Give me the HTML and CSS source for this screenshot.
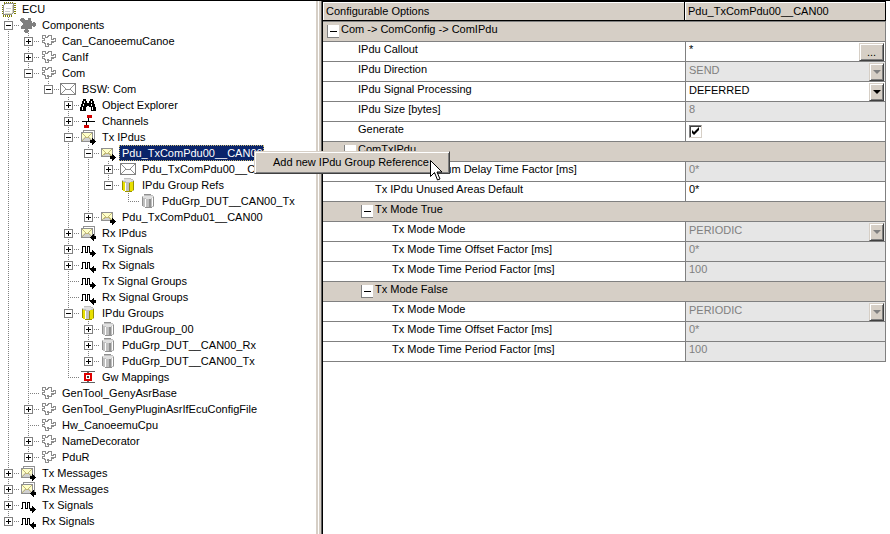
FILE: index.html
```html
<!DOCTYPE html>
<html lang="en">
<head>
<meta charset="utf-8">
<title>ECU configuration</title>
<link rel="stylesheet" href="styles.css">
</head>
<body>
<svg class="sprites" aria-hidden="true">
  <symbol id="chip" viewBox="0 0 16 16">
    <path d="M4 1.500h10M2.500 4v9M14.500 2v11M3 14.500h10" fill="none" stroke="#808000" stroke-width="2" stroke-dasharray="1 1"/>
    <path d="M5.500 2.500h8v9l-2 2h-8v-9z" fill="#fff" stroke="#909090"/>
    <path d="M6 7.500h5M5 10.500h5" stroke="#ccc"/>
    <path d="M12.500 4v8M5 12.500h7" stroke="#d8d8c0"/>
  </symbol>
  <symbol id="puzzle" viewBox="0 0 16 16">
    <path d="M1 1h3v1h1v1h3V1h3v3h1v2h1V5h2v1h1v3h-1v1h-2V9h-1v3H8v1h1v2H8v1H5v-1H4v-2h1v-1H1V9h1V8h1V6H2V5H1V4H0V2h1z" fill="#808080"/>
  </symbol>
  <symbol id="piece" viewBox="0 0 16 16">
    <path d="M2.500 2.500h3v2h2v-1h1v-1h3v4h2v-1h2v3h-2v1h-1v-1h-1v3h-3v-1h-1v1h1v2h-3v-3h-1v-1h-2v-2h2v-2h-2z" fill="#fff" stroke="#8c8c8c"/>
  </symbol>
  <symbol id="mail" viewBox="0 0 16 16">
    <path d="M.5 2.500h15v11H.5z" fill="#fff" stroke="#808080"/>
    <path d="M1 3l5 5h4l5-5M1 13l5-5M15 13l-5-5" fill="none" stroke="#909090"/>
  </symbol>
  <symbol id="binoculars" viewBox="0 0 16 16">
    <path d="M3 2h3v2h1v2h2V4h1V2h3v2h1v3h1v3h1v4h-5v-4H9V9H7v1H6v4H0v-4h1V7h1V4h1z"/>
    <path d="M4 4h1v2H4zM11 4h1v2h-1zM2 10h1v3H2zM12 10h1v3h-1zM3 7h1v2H3zM11 7h1v2h-1z" fill="#fff"/>
  </symbol>
  <symbol id="channels" viewBox="0 0 16 16">
    <path d="M2 8h13v1H2zM8 5h1v3H8zM6 9h1v3H6z"/>
    <path d="M7 2h5v3H7zM4 12h5v3H4z" fill="#d00000"/>
  </symbol>
  <symbol id="arrow-out" viewBox="0 0 16 16">
    <path d="M10 11h2V9h1v1h1v1h1v1h1v1h-1v1h-1v1h-1v1h-1v-2h-2z"/>
  </symbol>
  <symbol id="arrow-in" viewBox="0 0 16 16">
    <path d="M16 11h-2V9h-1v1h-1v1h-1v1h-1v1h1v1h1v1h1v1h1v-2h2z"/>
  </symbol>
  <symbol id="letters" viewBox="0 0 16 16">
    <path d="M3.500 1.500h11v10h-11z" fill="#fff" stroke="#909090"/>
    <path d="M1.500 3.500h11v9h-11z" fill="#ffffc8" stroke="#909090"/>
    <path d="M2 10l3-2 2 1 2-1 3 2v2H2z" fill="#d0d0d0"/>
    <path d="M2 4l4 4h2l4-4M2 12l4-4M12 12L8 8" fill="none" stroke="#c0b878"/>
  </symbol>
  <symbol id="letter" viewBox="0 0 16 16">
    <path d="M1.500 3.500h11v8h-11z" fill="#ffffc8" stroke="#909090"/>
    <path d="M2 10l3-2 2 1 2-1 3 2v1H2z" fill="#d0d0d0"/>
    <path d="M2 4l4 4h2l4-4M2 11l4-3M12 11L8 8" fill="none" stroke="#c0b878"/>
  </symbol>
  <symbol id="wave" viewBox="0 0 16 16">
    <path d="M1 11.500h1.500v-6h3v6h2v-6h2v6H11" fill="none" stroke="#000"/>
  </symbol>
  <symbol id="drum" viewBox="0 0 16 16">
    <path d="M4 1h7v1h2v1h1v11h-2v1H5v-1H3v-1H2V3h2z" fill="#c0c0c0"/>
    <path d="M3 3h10v2h-2v1H6V5H3z" fill="#e0e0e0"/>
    <path d="M5 6h1v8H5zM12 5h1v8h-1z" fill="#fff"/>
    <path d="M9 6h2v8H9zM2 4h1v9H2zM13 4h1v9h-1zM5 14h7v1H5zM4 1h7v1H4z" fill="#909090"/>
  </symbol>
  <symbol id="drum-yellow" viewBox="0 0 16 16">
    <path d="M4 1h7v1h2v1h1v11h-2v1H5v-1H3v-1H2V3h2z" fill="#c0c0c0"/>
    <path d="M3 5h2v9H3zM10 5h3v9h-3z" fill="#e8e000"/>
    <path d="M4 2h7v1h2v1h-2v1H6V4H3V3h1z" fill="#e0e0e0"/>
    <path d="M5 6h1v8H5z" fill="#fff"/>
    <path d="M2 4h1v9H2zM13 4h1v9h-1zM5 14h7v1H5zM9 6h1v8H9z" fill="#989000"/>
  </symbol>
  <symbol id="gateway" viewBox="0 0 16 16">
    <path d="M1 2h14v1H1zM1 13h14v1H1zM7 3h2v2H7zM7 11h2v2H7z" fill="#606060"/>
    <path d="M4 4h8v8H4z" fill="#e00000"/><path d="M6 6h4v4H6z" fill="#fff"/><path d="M7 7h2v2H7z" fill="#404040"/>
  </symbol>
</svg>

<main class="workspace">
  <nav class="tree" aria-label="ECU tree">
    <div class="node root"><svg class="icon"><use href="#chip"/></svg><span class="label">ECU</span></div>
    <ul class="branch">
      <li>
        <div class="node"><button class="toggle open" aria-label="Collapse"></button><svg class="icon"><use href="#puzzle"/></svg><span class="label">Components</span></div>
        <ul class="branch">
          <li><div class="node"><button class="toggle" aria-label="Expand"></button><svg class="icon"><use href="#piece"/></svg><span class="label">Can_CanoeemuCanoe</span></div></li>
          <li><div class="node"><button class="toggle" aria-label="Expand"></button><svg class="icon"><use href="#piece"/></svg><span class="label">CanIf</span></div></li>
          <li>
            <div class="node"><button class="toggle open" aria-label="Collapse"></button><svg class="icon"><use href="#piece"/></svg><span class="label">Com</span></div>
            <ul class="branch">
              <li>
                <div class="node"><button class="toggle open" aria-label="Collapse"></button><svg class="icon"><use href="#mail"/></svg><span class="label">BSW: Com</span></div>
                <ul class="branch">
                  <li><div class="node"><button class="toggle" aria-label="Expand"></button><svg class="icon"><use href="#binoculars"/></svg><span class="label">Object Explorer</span></div></li>
                  <li><div class="node"><button class="toggle" aria-label="Expand"></button><svg class="icon"><use href="#channels"/></svg><span class="label">Channels</span></div></li>
                  <li>
                    <div class="node"><button class="toggle open" aria-label="Collapse"></button><svg class="icon"><use href="#letters"/><use href="#arrow-out"/></svg><span class="label">Tx IPdus</span></div>
                    <ul class="branch">
                      <li>
                        <div class="node"><button class="toggle open" aria-label="Collapse"></button><svg class="icon"><use href="#letter"/><use href="#arrow-out"/></svg><span class="label selected">Pdu_TxComPdu00__CAN00</span>
                          <div class="context-menu" role="menu">
                            <button class="menu-item" role="menuitem">Add new IPdu Group Reference</button>
                            <svg class="pointer" viewBox="0 0 12 21" aria-hidden="true"><path d="M.5 .5v16l4-4 3 7.500 2.500-1-3-7h5z" fill="#fff" stroke="#000"/></svg>
                          </div>
                        </div>
                        <ul class="branch">
                          <li><div class="node"><button class="toggle" aria-label="Expand"></button><svg class="icon"><use href="#mail"/></svg><span class="label">Pdu_TxComPdu00__CAN00</span></div></li>
                          <li>
                            <div class="node"><button class="toggle open" aria-label="Collapse"></button><svg class="icon"><use href="#drum-yellow"/></svg><span class="label">IPdu Group Refs</span></div>
                            <ul class="branch">
                              <li><div class="node leaf"><svg class="icon"><use href="#drum"/></svg><span class="label">PduGrp_DUT__CAN00_Tx</span></div></li>
                            </ul>
                          </li>
                        </ul>
                      </li>
                      <li><div class="node"><button class="toggle" aria-label="Expand"></button><svg class="icon"><use href="#letter"/><use href="#arrow-out"/></svg><span class="label">Pdu_TxComPdu01__CAN00</span></div></li>
                    </ul>
                  </li>
                  <li><div class="node"><button class="toggle" aria-label="Expand"></button><svg class="icon"><use href="#letters"/><use href="#arrow-in"/></svg><span class="label">Rx IPdus</span></div></li>
                  <li><div class="node"><button class="toggle" aria-label="Expand"></button><svg class="icon"><use href="#wave"/><use href="#arrow-out"/></svg><span class="label">Tx Signals</span></div></li>
                  <li><div class="node"><button class="toggle" aria-label="Expand"></button><svg class="icon"><use href="#wave"/><use href="#arrow-in"/></svg><span class="label">Rx Signals</span></div></li>
                  <li><div class="node leaf"><svg class="icon"><use href="#wave"/><use href="#arrow-out"/></svg><span class="label">Tx Signal Groups</span></div></li>
                  <li><div class="node leaf"><svg class="icon"><use href="#wave"/><use href="#arrow-in"/></svg><span class="label">Rx Signal Groups</span></div></li>
                  <li>
                    <div class="node"><button class="toggle open" aria-label="Collapse"></button><svg class="icon"><use href="#drum-yellow"/></svg><span class="label">IPdu Groups</span></div>
                    <ul class="branch">
                      <li><div class="node"><button class="toggle" aria-label="Expand"></button><svg class="icon"><use href="#drum"/></svg><span class="label">IPduGroup_00</span></div></li>
                      <li><div class="node"><button class="toggle" aria-label="Expand"></button><svg class="icon"><use href="#drum"/></svg><span class="label">PduGrp_DUT__CAN00_Rx</span></div></li>
                      <li><div class="node"><button class="toggle" aria-label="Expand"></button><svg class="icon"><use href="#drum"/></svg><span class="label">PduGrp_DUT__CAN00_Tx</span></div></li>
                    </ul>
                  </li>
                  <li><div class="node leaf"><svg class="icon"><use href="#gateway"/></svg><span class="label">Gw Mappings</span></div></li>
                </ul>
              </li>
            </ul>
          </li>
          <li><div class="node leaf"><svg class="icon"><use href="#piece"/></svg><span class="label">GenTool_GenyAsrBase</span></div></li>
          <li><div class="node"><button class="toggle" aria-label="Expand"></button><svg class="icon"><use href="#piece"/></svg><span class="label">GenTool_GenyPluginAsrIfEcuConfigFile</span></div></li>
          <li><div class="node leaf"><svg class="icon"><use href="#piece"/></svg><span class="label">Hw_CanoeemuCpu</span></div></li>
          <li><div class="node"><button class="toggle" aria-label="Expand"></button><svg class="icon"><use href="#piece"/></svg><span class="label">NameDecorator</span></div></li>
          <li><div class="node"><button class="toggle" aria-label="Expand"></button><svg class="icon"><use href="#piece"/></svg><span class="label">PduR</span></div></li>
        </ul>
      </li>
      <li><div class="node"><button class="toggle" aria-label="Expand"></button><svg class="icon"><use href="#letters"/><use href="#arrow-out"/></svg><span class="label">Tx Messages</span></div></li>
      <li><div class="node"><button class="toggle" aria-label="Expand"></button><svg class="icon"><use href="#letters"/><use href="#arrow-in"/></svg><span class="label">Rx Messages</span></div></li>
      <li><div class="node"><button class="toggle" aria-label="Expand"></button><svg class="icon"><use href="#wave"/><use href="#arrow-out"/></svg><span class="label">Tx Signals</span></div></li>
      <li><div class="node"><button class="toggle" aria-label="Expand"></button><svg class="icon"><use href="#wave"/><use href="#arrow-in"/></svg><span class="label">Rx Signals</span></div></li>
    </ul>
  </nav>
  <div class="splitter"></div>
  <section class="options">
    <table class="grid">
      <colgroup><col><col class="value-column"></colgroup>
      <thead><tr><th scope="col">Configurable Options</th><th scope="col">Pdu_TxComPdu00__CAN00</th></tr></thead>
      <tbody>
        <tr class="group"><td colspan="2"><div class="name level-0"><button class="fold" aria-label="Collapse"></button>Com -&gt; ComConfig -&gt; ComIPdu</div></td></tr>
        <tr><td><label class="name level-1" for="callout">IPdu Callout</label></td><td><div class="field"><input id="callout" type="text" value="*"><button class="browse" aria-label="Browse">...</button></div></td></tr>
        <tr><td><label class="name level-1" for="direction">IPdu Direction</label></td><td class="locked"><div class="field"><select id="direction" disabled><option>SEND</option></select><span class="drop"></span></div></td></tr>
        <tr><td><label class="name level-1" for="processing">IPdu Signal Processing</label></td><td><div class="field"><select id="processing"><option>DEFERRED</option></select><span class="drop"></span></div></td></tr>
        <tr><td><label class="name level-1" for="size">IPdu Size [bytes]</label></td><td class="locked"><div class="field"><input id="size" type="text" value="8" disabled></div></td></tr>
        <tr><td><label class="name level-1" for="generate">Generate</label></td><td><div class="field"><input id="generate" type="checkbox" checked></div></td></tr>
        <tr class="group"><td colspan="2"><div class="name level-1"><button class="fold" aria-label="Collapse"></button>ComTxIPdu</div></td></tr>
        <tr><td><label class="name level-2" for="delay">Tx IPdu Minimum Delay Time Factor [ms]</label></td><td class="locked"><div class="field"><input id="delay" type="text" value="0*" disabled></div></td></tr>
        <tr><td><label class="name level-2" for="unused">Tx IPdu Unused Areas Default</label></td><td><div class="field"><input id="unused" type="text" value="0*"></div></td></tr>
        <tr class="group"><td colspan="2"><div class="name level-2"><button class="fold" aria-label="Collapse"></button>Tx Mode True</div></td></tr>
        <tr><td><label class="name level-3" for="true-mode">Tx Mode Mode</label></td><td class="locked"><div class="field"><select id="true-mode" disabled><option>PERIODIC</option></select><span class="drop"></span></div></td></tr>
        <tr><td><label class="name level-3" for="true-offset">Tx Mode Time Offset Factor [ms]</label></td><td class="locked"><div class="field"><input id="true-offset" type="text" value="0*" disabled></div></td></tr>
        <tr><td><label class="name level-3" for="true-period">Tx Mode Time Period Factor [ms]</label></td><td class="locked"><div class="field"><input id="true-period" type="text" value="100" disabled></div></td></tr>
        <tr class="group"><td colspan="2"><div class="name level-2"><button class="fold" aria-label="Collapse"></button>Tx Mode False</div></td></tr>
        <tr><td><label class="name level-3" for="false-mode">Tx Mode Mode</label></td><td class="locked"><div class="field"><select id="false-mode" disabled><option>PERIODIC</option></select><span class="drop"></span></div></td></tr>
        <tr><td><label class="name level-3" for="false-offset">Tx Mode Time Offset Factor [ms]</label></td><td class="locked"><div class="field"><input id="false-offset" type="text" value="0*" disabled></div></td></tr>
        <tr><td><label class="name level-3" for="false-period">Tx Mode Time Period Factor [ms]</label></td><td class="locked"><div class="field"><input id="false-period" type="text" value="100" disabled></div></td></tr>
      </tbody>
    </table>
  </section>
</main>
</body>
</html>
```
FILE: styles.css
```css
:root {
  --face: #d6cfc6;
  --line: #808080;
  --locked: #e6e6e6;
  --navy: #0a246a;
}

* { box-sizing: border-box; }

body {
  margin: 0;
  background: #fff;
  color: #000;
  font: 11px/16px "Liberation Sans", Arial, sans-serif;
}

button, input, select {
  margin: 0;
  padding: 0;
  border: 0;
  border-radius: 0;
  appearance: none;
  background: none;
  color: inherit;
  font: inherit;
}

.sprites { display: none; }

.workspace {
  display: grid;
  grid-template-columns: 316px 7px 1fr;
  min-height: 100vh;
  border-top: 1px solid #000;
}

/* Tree */
.branch {
  margin: 0;
  padding: 0;
  list-style: none;
}

.branch .branch { padding-left: 20px; }

.branch > li {
  background: repeating-linear-gradient(var(--line) 0 1px, transparent 1px 2px) 8px 0 / 1px 100% no-repeat;
}

.branch > li:last-child { background-size: 1px 8px; }

.node {
  position: relative;
  display: flex;
  align-items: center;
  height: 16px;
  padding-left: 4px;
  white-space: nowrap;
  background: repeating-linear-gradient(90deg, var(--line) 0 1px, transparent 1px 2px) 8px 8px / 12px 1px no-repeat;
}

.node.leaf { padding-left: 20px; }
.node.root { padding-left: 0; background: none; }

.toggle {
  width: 9px;
  height: 9px;
  margin-right: 7px;
  border: 1px solid var(--line);
  background:
    linear-gradient(#000, #000) center / 5px 1px no-repeat,
    linear-gradient(#000, #000) center / 1px 5px no-repeat,
    #fff;
}

.toggle.open { background: linear-gradient(#000, #000) center / 5px 1px no-repeat, #fff; }

.icon {
  width: 16px;
  height: 16px;
  margin-right: 3px;
  shape-rendering: crispEdges;
}

.label {
  padding: 0 1px 0 3px;
}

.selected {
  background: var(--navy);
  color: #fff;
  outline: 1px dotted #c8b870;
  outline-offset: -1px;
}

.context-menu {
  position: absolute;
  z-index: 2;
  top: 6px;
  left: 174px;
  padding: 2px;
  border: 1px solid;
  border-color: var(--face) #404040 #404040 var(--face);
  background: var(--face);
  box-shadow: inset 1px 1px #fff, inset -1px -1px var(--line);
}

.menu-item {
  display: block;
  padding: 0 18px 0 16px;
  line-height: 17px;
}

.pointer {
  position: absolute;
  top: 8px;
  left: 175px;
  width: 12px;
  height: 21px;
}

.splitter {
  border: solid;
  border-width: 0 1px 0 2px;
  border-color: #000 #000 #000 var(--face);
  background: linear-gradient(90deg, #fff 1px, var(--face) 1px 3px, #606060 3px);
}

/* Option grid */
.options { padding-right: 4px; }

.grid {
  width: 100%;
  table-layout: fixed;
  border-collapse: separate;
  border-spacing: 0;
  border-top: 1px solid #000;
}

.value-column { width: 201px; }

.grid th {
  height: 19px;
  padding: 0 3px;
  border: solid #000;
  border-width: 0 1px 1px 0;
  background: var(--face);
  box-shadow: inset 1px 1px #fff;
  font-weight: normal;
  line-height: 18px;
  text-align: left;
}

.grid td {
  height: 20px;
  padding: 0;
  border-top: 1px solid var(--line);
  background: #fff;
}

.grid tr:last-child td { border-bottom: 1px solid var(--line); }
.grid td:last-child { border-right: 1px solid var(--line); }
.grid td + td { border-left: 1px solid var(--line); }
.grid .group td { background: var(--face); }
.grid .locked { background: var(--locked); color: var(--line); }

.name {
  display: flex;
  align-items: center;
  height: 19px;
  padding-bottom: 5px;
}

.level-0 { padding-left: 18px; }
.level-1 { padding-left: 35px; }
.level-2 { padding-left: 52px; }
.level-3 { padding-left: 69px; }

.fold {
  width: 12px;
  height: 13px;
  margin: 5px 2px 0 -14px;
  border: solid var(--line);
  border-width: 0 0 1px 1px;
  background: linear-gradient(#000, #000) center / 7px 1px no-repeat, #fff;
}

.field {
  display: flex;
  align-items: center;
  height: 19px;
  padding-right: 1px;
}

.field input[type="text"], .field select {
  flex: 1;
  min-width: 0;
  height: 19px;
  padding: 0 3px 6px;
  opacity: 1;
}

.field input[type="checkbox"] {
  width: 13px;
  height: 13px;
  margin-left: 3px;
  border: 1px solid;
  border-color: var(--line) var(--face) var(--face) var(--line);
  background: #fff url("data:image/svg+xml,%3Csvg xmlns='http://www.w3.org/2000/svg' viewBox='0 0 11 11'%3E%3Cpath d='M2 4v3l2 2 5-5V1L4 6z'/%3E%3C/svg%3E") center / 11px 11px;
  box-shadow: inset 1px 1px #404040;
}

.browse, .drop {
  height: 18px;
  border: 1px solid;
  border-color: var(--face) #404040 #404040 var(--face);
  background: var(--face);
  box-shadow: inset 1px 1px #fff, inset -1px -1px var(--line);
}

.browse { width: 25px; }

.drop {
  display: grid;
  place-items: center;
  width: 15px;
  pointer-events: none;
}

.drop::before {
  content: "";
  border: solid transparent;
  border-width: 4px 4px 0;
  border-top-color: #000;
}

.locked .drop::before { border-top-color: var(--line); }
```
